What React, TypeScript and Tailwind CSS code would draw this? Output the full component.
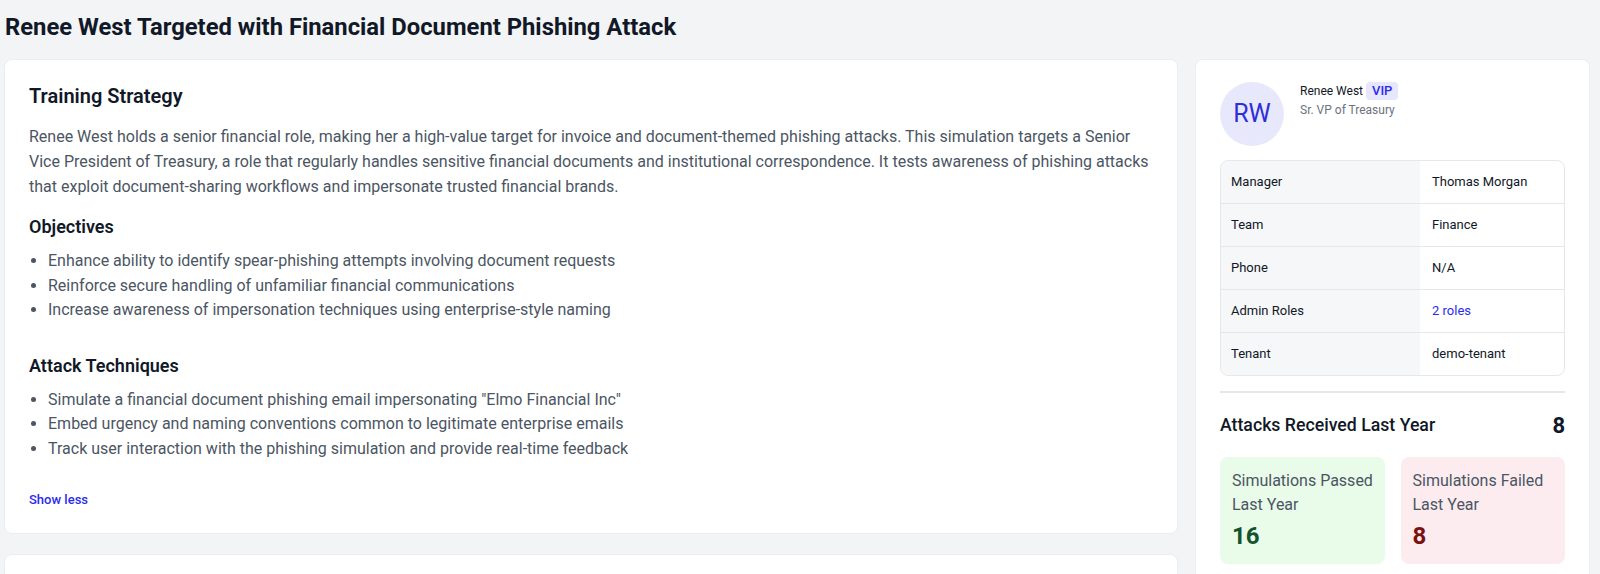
// Phishing simulation detail page: training strategy card + target profile sidebar.
const FONT = "font-['Roboto','Liberation_Sans',sans-serif]";

const objectives = [
  "Enhance ability to identify spear-phishing attempts involving document requests",
  "Reinforce secure handling of unfamiliar financial communications",
  "Increase awareness of impersonation techniques using enterprise-style naming",
];

const techniques = [
  'Simulate a financial document phishing email impersonating "Elmo Financial Inc"',
  "Embed urgency and naming conventions common to legitimate enterprise emails",
  "Track user interaction with the phishing simulation and provide real-time feedback",
];

const profileRows: { label: string; value: string; link?: boolean }[] = [
  { label: "Manager", value: "Thomas Morgan" },
  { label: "Team", value: "Finance" },
  { label: "Phone", value: "N/A" },
  { label: "Admin Roles", value: "2 roles", link: true },
  { label: "Tenant", value: "demo-tenant" },
];

// ── Left column ──────────────────────────────────────────────────────────────

function BulletList({ items }: { items: string[] }) {
  return (
    <ul className="mt-2 list-disc pl-[19px] text-base leading-[24.5px] text-[#4b5563] marker:text-[#4b5563]">
      {items.map((item) => (
        <li key={item}>{item}</li>
      ))}
    </ul>
  );
}

function TrainingStrategyCard() {
  return (
    <section className="rounded-lg border border-[#eceef1] bg-white px-6 pt-[22px] pb-[23px]">
      <h2 className="text-xl leading-7 font-semibold text-[#111827]">Training Strategy</h2>
      <p className="mt-[14px] text-base leading-[25px] text-[#4b5563]">
        Renee West holds a senior financial role, making her a high-value target for invoice and
        document-themed phishing attacks. This simulation targets a Senior Vice President of
        Treasury, a role that regularly handles sensitive financial documents and institutional
        correspondence. It tests awareness of phishing attacks that exploit document-sharing
        workflows and impersonate trusted financial brands.
      </p>

      <h3 className="mt-[14px] text-lg leading-7 font-semibold text-[#111827]">Objectives</h3>
      <BulletList items={objectives} />

      <h3 className="mt-[29px] text-lg leading-7 font-semibold text-[#111827]">
        Attack Techniques
      </h3>
      <BulletList items={techniques} />

      <button
        type="button"
        className="mt-[29px] block text-[13px] leading-5 font-medium text-[#2b2bf0]"
      >
        Show less
      </button>
    </section>
  );
}

// ── Right column ─────────────────────────────────────────────────────────────

function ProfileCard() {
  return (
    <aside className="rounded-lg border border-[#eceef1] bg-white px-6 pt-[22px] pb-6">
      <div className="flex items-start gap-4">
        <div className="flex h-16 w-16 shrink-0 items-center justify-center rounded-full bg-[#e8e8fc] text-[25px] text-[#2f2fd8]">
          RW
        </div>
        <div>
          <div className="flex items-center gap-[3px]">
            <span className="text-xs leading-[18px] text-[#111827]">Renee West</span>
            <span className="rounded-[4px] bg-[#e6e6fc] px-[6px] text-[13px] leading-[18px] font-medium text-[#2b2bf0]">
              VIP
            </span>
          </div>
          <div className="text-xs leading-5 text-[#6b7280]">Sr. VP of Treasury</div>
        </div>
      </div>

      <div className="mt-[14px] overflow-hidden rounded-lg border border-[#e5e7eb]">
        <table className="w-full border-collapse text-[13px] text-[#111827]">
          <tbody>
            {profileRows.map((row, i) => (
              <tr key={row.label} className={i > 0 ? "border-t border-[#e5e7eb]" : ""}>
                <td className="w-[199px] bg-[#f6f7f9] py-3 pr-3 pl-[10px] leading-[18px]">
                  {row.label}
                </td>
                <td
                  className={`px-3 py-3 leading-[18px] ${row.link ? "text-[#2b2bf0]" : "text-[#111827]"}`}
                >
                  {row.value}
                </td>
              </tr>
            ))}
          </tbody>
        </table>
      </div>

      <div className="mt-[15px] h-[2px] bg-[#e5e7eb]" />

      <div className="mt-4 flex h-8 items-center justify-between">
        <span className="text-[17.7px] font-medium text-[#111827]">Attacks Received Last Year</span>
        <span className="text-[22px] font-bold text-[#111827]">8</span>
      </div>

      <div className="mt-[16px] grid grid-cols-2 gap-4">
        <div className="rounded-lg bg-[#e9fbe9] py-3 pr-1 pl-3">
          <div className="text-base leading-6 text-[#4b5563]">Simulations Passed Last Year</div>
          <div className="mt-[3px] text-2xl leading-8 font-bold text-[#14532d]">16</div>
        </div>
        <div className="rounded-lg bg-[#fdecef] py-3 pr-1 pl-3">
          <div className="text-base leading-6 text-[#4b5563]">Simulations Failed Last Year</div>
          <div className="mt-[3px] text-2xl leading-8 font-bold text-[#7a1010]">8</div>
        </div>
      </div>
    </aside>
  );
}

export default function App() {
  return (
    <div className={`${FONT} min-h-screen bg-[#f3f4f6] pt-3 pr-[10px] pl-[4px] pb-6`}>
      <h1 className="mb-[17px] ml-px text-[23.8px] leading-[30px] font-bold text-[#111827]">
        Renee West Targeted with Financial Document Phishing Attack
      </h1>
      <div className="grid grid-cols-[1fr_395px] gap-[17px]">
        <div className="flex flex-col gap-5">
          <TrainingStrategyCard />
          <section className="h-[200px] rounded-lg border border-[#eceef1] bg-white" />
        </div>
        <ProfileCard />
      </div>
    </div>
  );
}
